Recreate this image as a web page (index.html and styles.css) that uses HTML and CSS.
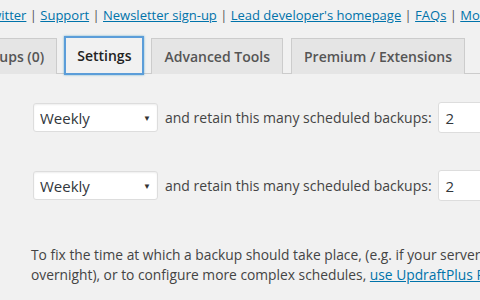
FILE: index.html
```html
<!DOCTYPE html>
<html>
<head>
<meta charset="utf-8">
<link rel="stylesheet" href="styles.css">
</head>
<body>
<div class="page">
  <div class="links">
    <a href="#">Twitter</a> | <a href="#">Support</a> | <a href="#">Newsletter sign-up</a> | <a href="#">Lead developer's homepage</a> | <a href="#">FAQs</a> | <a href="#">More plugins</a>
  </div>
  <div class="tabs">
    <span class="tab">Existing Backups (0)</span>
    <span class="tab active">Settings</span>
    <span class="tab">Advanced Tools</span>
    <span class="tab">Premium / Extensions</span>
  </div>
  <div class="section">
    <div class="row">
      <span class="select">Weekly<span class="arrow">▼</span></span>
      <span class="label">and retain this many scheduled backups:</span>
      <span class="input">2</span>
    </div>
    <div class="row">
      <span class="select">Weekly<span class="arrow">▼</span></span>
      <span class="label">and retain this many scheduled backups:</span>
      <span class="input">2</span>
    </div>
    <p class="note">To fix the time at which a backup should take place, (e.g. if your server is busy at day and you want to run<br>overnight), or to configure more complex schedules, <a href="#">use UpdraftPlus Premium</a></p>
  </div>
</div>
</body>
</html>
```

FILE: styles.css
```css
html, body {
  margin: 0;
  padding: 0;
  background: #f1f1f1;
}
body {
  font-family: "Open Sans", "Noto Sans", sans-serif;
  color: #444;
  width: 480px;
  height: 300px;
  overflow: hidden;
}
.page {
  width: 480px;
  overflow: hidden;
}
a {
  color: #0073aa;
  text-decoration: underline;
}
.links {
  white-space: nowrap;
  font-size: 13px;
  color: #555;
  margin-left: -16px;
  padding-top: 6px;
  height: 26px;
}
.tabs {
  display: flex;
  gap: 8px;
  margin-left: -102px;
  margin-top: 5px;
  border-bottom: 1px solid #ccc;
  height: 36px;
  align-items: flex-end;
  white-space: nowrap;
}
.tab {
  flex: none;
  box-sizing: border-box;
  height: 36px;
  margin-bottom: -1px;
  padding: 0 12px;
  display: flex;
  align-items: center;
  font-size: 14px;
  font-weight: 600;
  color: #555;
  background: #e5e5e5;
  border: 1px solid #ccc;
  border-bottom: none;
}
.tab.active {
  background: #f1f1f1;
  color: #222;
  border: 1px solid #5b9dd9;
  box-shadow: 0 0 0 1px #5b9dd9, 0 0 2px 1px rgba(30,140,190,0.6);
  height: 37px;
  margin-bottom: -1px;
  padding: 0 11px;
}
.section {
  padding-left: 33px;
  padding-top: 28px;
}
.row {
  display: flex;
  align-items: center;
  white-space: nowrap;
  height: 31px;
  margin-bottom: 37px;
  font-size: 14px;
}
.row > span {
  flex: none;
}
.select {
  box-sizing: border-box;
  width: 125px;
  height: 29px;
  background: #fff;
  border: 1px solid #ddd;
  border-radius: 3px;
  padding: 0 6px 0 6px;
  display: flex;
  align-items: center;
  justify-content: space-between;
  color: #32373c;
  box-shadow: inset 0 1px 2px rgba(0,0,0,0.07);
  font-size: 15px;
}
.arrow {
  font-size: 8px;
  color: #333;
}
.label {
  margin-left: 7px;
  color: #444;
}
.input {
  box-sizing: border-box;
  margin-left: 6px;
  width: 80px;
  height: 31px;
  background: #fff;
  border: 1px solid #ddd;
  border-radius: 3px;
  padding: 0 7px;
  display: flex;
  align-items: center;
  font-size: 15px;
  color: #32373c;
}
.note {
  margin: 0;
  margin-left: -2px;
  padding-top: 7px;
  font-size: 13.8px;
  line-height: 20px;
  color: #444;
  white-space: nowrap;
}
```
